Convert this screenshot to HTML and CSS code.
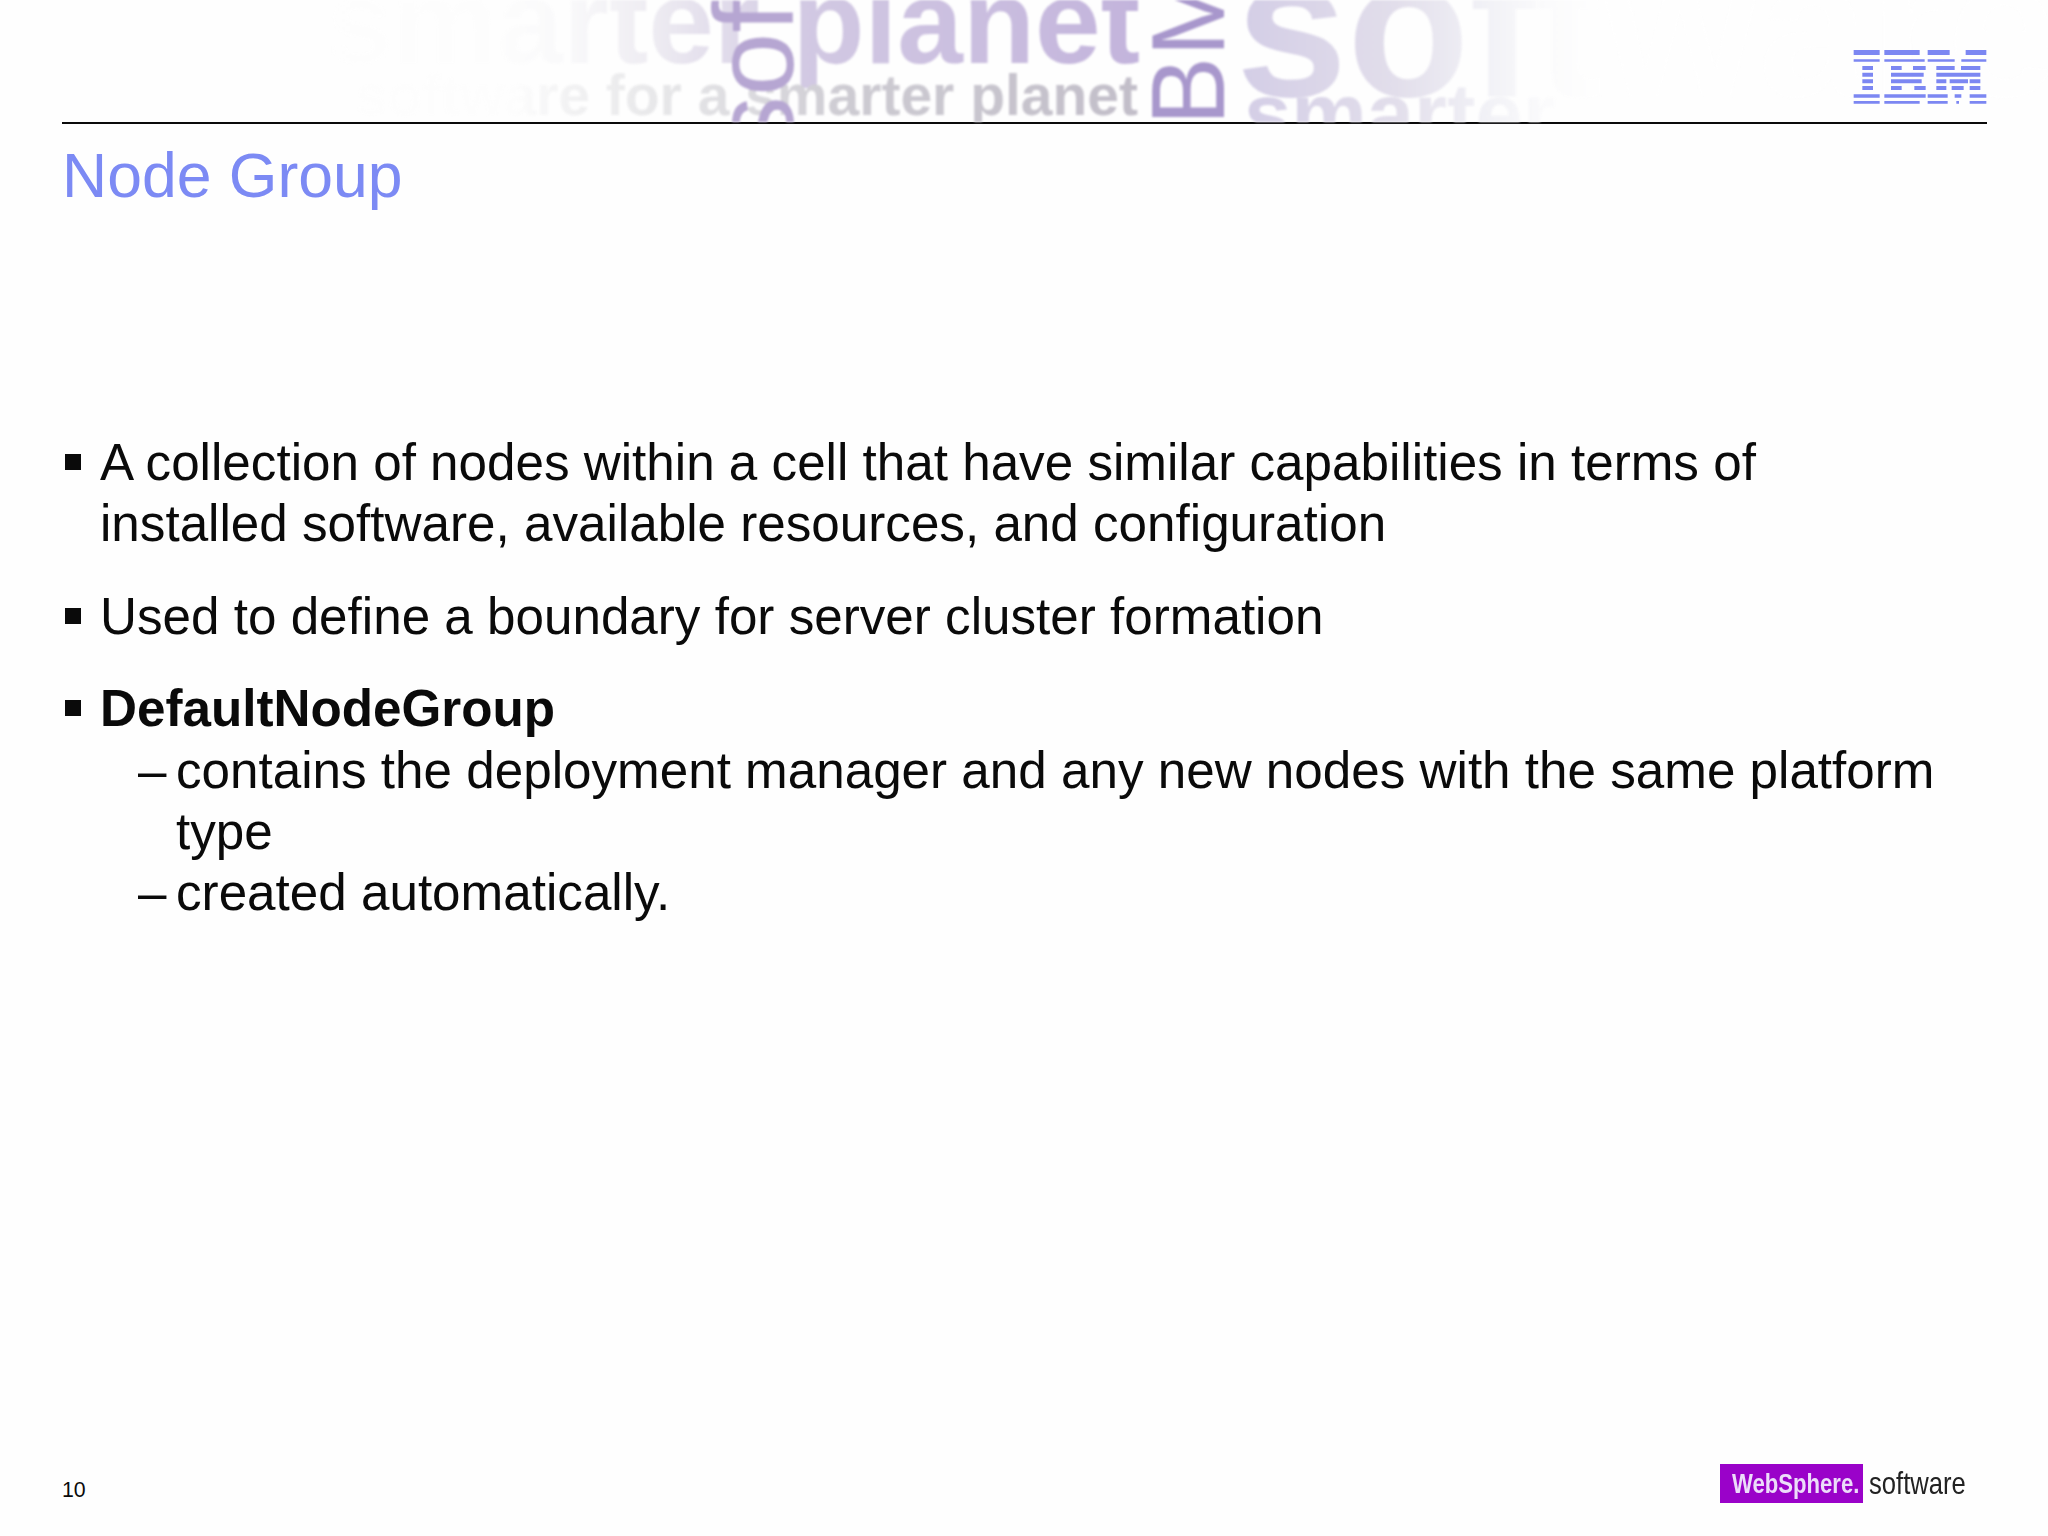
FILE: index.html
```html
<!DOCTYPE html>
<html lang="en">
<head>
<meta charset="utf-8">
<title>Node Group</title>
<link rel="stylesheet" href="styles.css">
</head>
<body>
<div class="slide">
  <header class="banner">
    <svg class="watermark" width="2048" height="122" viewBox="0 0 2048 122" aria-hidden="true">
      <defs>
        <linearGradient id="bigFade" gradientUnits="userSpaceOnUse" x1="300" y1="0" x2="1140" y2="0">
          <stop offset="0" stop-color="#fefefe"/>
          <stop offset="0.24" stop-color="#fdfdfd"/>
          <stop offset="0.31" stop-color="#fafafb"/>
          <stop offset="0.42" stop-color="#eeecf2"/>
          <stop offset="0.6" stop-color="#d2c9e3"/>
          <stop offset="1" stop-color="#c3b4dc"/>
        </linearGradient>
        <linearGradient id="lineFade" gradientUnits="userSpaceOnUse" x1="100" y1="0" x2="1140" y2="0">
          <stop offset="0" stop-color="#fefefe"/>
          <stop offset="0.4" stop-color="#fdfdfd"/>
          <stop offset="0.45" stop-color="#f2f2f3"/>
          <stop offset="0.55" stop-color="#e6e6e8"/>
          <stop offset="0.72" stop-color="#cdcbd2"/>
          <stop offset="1" stop-color="#c2bec9"/>
        </linearGradient>
        <linearGradient id="softFade" gradientUnits="userSpaceOnUse" x1="1235" y1="0" x2="1590" y2="0">
          <stop offset="0" stop-color="#d3cde6"/>
          <stop offset="0.45" stop-color="#e2deeb"/>
          <stop offset="0.7" stop-color="#f1f1f6"/>
          <stop offset="0.88" stop-color="#fbfbfc"/>
          <stop offset="1" stop-color="#fefefe"/>
        </linearGradient>
      </defs>
      <text class="wm-big" x="1140" y="63" fill="url(#bigFade)">smarter planet</text>
      <text class="wm-line" x="1138" y="115" fill="url(#lineFade)">software for a smarter planet</text>
      <text class="wm-soft" x="1236" y="96" fill="url(#softFade)">software</text>
      <text class="wm-under" x="1244" y="143" fill="url(#softFade)">smarter</text>
      <text class="wm-vert" transform="translate(793 153) rotate(-90)">software</text>
      <text class="wm-ibm" transform="translate(1224 154) rotate(-90)">IBM</text>
    </svg>
    <svg class="ibm-logo" width="134" height="54" viewBox="102 60 398 162" role="img" aria-label="IBM">
      <path class="ibm-bars" d="M102 60h78v15h-78zM194 60h106v15h-106zM324 60h66v15h-66zM438 60h62v15h-62zM102 88h78v7h-78zM194 88h121v7h-121zM324 88h81v7h-81zM425 88h75v7h-75zM128 108h32v12h-32zM214 108h32v12h-32zM280 108h38v12h-38zM350 108h55v12h-55zM424 108h58v12h-58zM128 128h32v12h-32zM214 128h98v12h-98zM350 128h132v12h-132zM128 148h32v12h-32zM214 148h92v12h-92zM350 148h30v12h-30zM390 148h55v12h-55zM450 148h32v12h-32zM128 168h32v12h-32zM214 168h32v12h-32zM284 168h34v12h-34zM350 168h30v12h-30zM396 168h36v12h-36zM450 168h32v12h-32zM102 193h78v10h-78zM194 193h124v10h-124zM324 193h60v10h-60zM405 193h20v10h-20zM450 193h50v10h-50zM102 213h78v8h-78zM194 213h106v8h-106zM324 213h60v8h-60zM410 213h8v8h-8zM450 213h50v8h-50z"/>
    </svg>
  </header>

  <main class="content">
    <h1 class="title">Node Group</h1>
    <ul class="points">
      <li class="point">A collection of nodes within a cell that have similar capabilities in terms of installed software, available resources, and configuration</li>
      <li class="point">Used to define a boundary for server cluster formation</li>
      <li class="point">
        <strong class="term">DefaultNodeGroup</strong>
        <ul class="subpoints">
          <li class="subpoint">contains the deployment manager and any new nodes with the same platform type</li>
          <li class="subpoint">created automatically.</li>
        </ul>
      </li>
    </ul>
  </main>

  <footer class="footer">
    <span class="page-number">10</span>
    <div class="brand">
      <span class="brand-box"><span class="brand-name">WebSphere.</span></span>
      <span class="brand-soft">software</span>
    </div>
  </footer>
</div>
</body>
</html>
```

FILE: styles.css
```css
* {
  box-sizing: border-box;
}

html,
body {
  margin: 0;
  padding: 0;
  background: #fefefe;
}

.slide {
  position: relative;
  display: flex;
  flex-direction: column;
  width: 2048px;
  height: 1536px;
  overflow: hidden;
  font-family: "Liberation Sans", Arial, sans-serif;
  color: #0a0a0a;
  background: #fefefe;
}

/* Banner */
.banner {
  display: flex;
  justify-content: flex-end;
  align-items: flex-start;
  height: 124px;
  margin: 0 61px 0 62px;
  padding-top: 50px;
  border-bottom: 2px solid #0a0a0a;
}

.watermark {
  position: absolute;
  top: 0;
  left: 0;
  font-family: "Liberation Sans", Arial, sans-serif;
  filter: blur(0.8px);
}

.wm-big {
  font-size: 118px;
  font-weight: 700;
  text-anchor: end;
}

.wm-line {
  font-size: 57px;
  font-weight: 700;
  text-anchor: end;
}

.wm-soft {
  font-size: 200px;
  font-weight: 700;
}

.wm-under {
  font-size: 85px;
  font-weight: 700;
}

.wm-vert {
  font-size: 114px;
  fill: #b6a6d2;
}

.wm-ibm {
  font-size: 103px;
  fill: #a897cc;
}

.ibm-logo {
  position: relative;
  display: block;
  filter: blur(0.5px);
}

.ibm-bars {
  fill: #7c87f2;
}

/* Content */
.content {
  flex: 1;
  padding: 0 102px 0 62px;
}

.title {
  margin: 15px 0 0;
  font-size: 62.5px;
  font-weight: 400;
  line-height: 72px;
  color: #7c8af4;
}

.points {
  margin: 221px 0 0;
  padding: 0;
  list-style: none;
  font-size: 51.2px;
  line-height: 61.4px;
}

.point {
  position: relative;
  margin-bottom: 31px;
  padding-left: 38px;
}

.point::before {
  content: "";
  position: absolute;
  left: 3px;
  top: 22px;
  width: 16px;
  height: 16px;
  background: #0a0a0a;
}

.term {
  font-weight: 700;
}

.subpoints {
  margin: 0;
  padding: 0;
  list-style: none;
}

.subpoint {
  position: relative;
  padding-left: 76px;
}

.subpoint::before {
  content: "\2013";
  position: absolute;
  left: 38px;
}

/* Footer */
.footer {
  display: flex;
  justify-content: space-between;
  align-items: flex-end;
  margin: 0 82px 33px 62px;
}

.page-number {
  margin-bottom: 1px;
  font-size: 21.3px;
  line-height: 24px;
}

.brand {
  display: flex;
  align-items: center;
  gap: 6px;
}

.brand-box {
  display: flex;
  align-items: center;
  width: 143px;
  height: 39px;
  padding-left: 12px;
  background: #9a02c9;
}

.brand-name {
  display: block;
  font-size: 28px;
  font-weight: 700;
  white-space: nowrap;
  color: #ecdcfa;
  transform: scaleX(0.79);
  transform-origin: left center;
}

.brand-soft {
  display: block;
  width: 97px;
  font-size: 32px;
  line-height: 39px;
  white-space: nowrap;
  color: #222;
  transform: scaleX(0.8);
  transform-origin: left center;
}
```
